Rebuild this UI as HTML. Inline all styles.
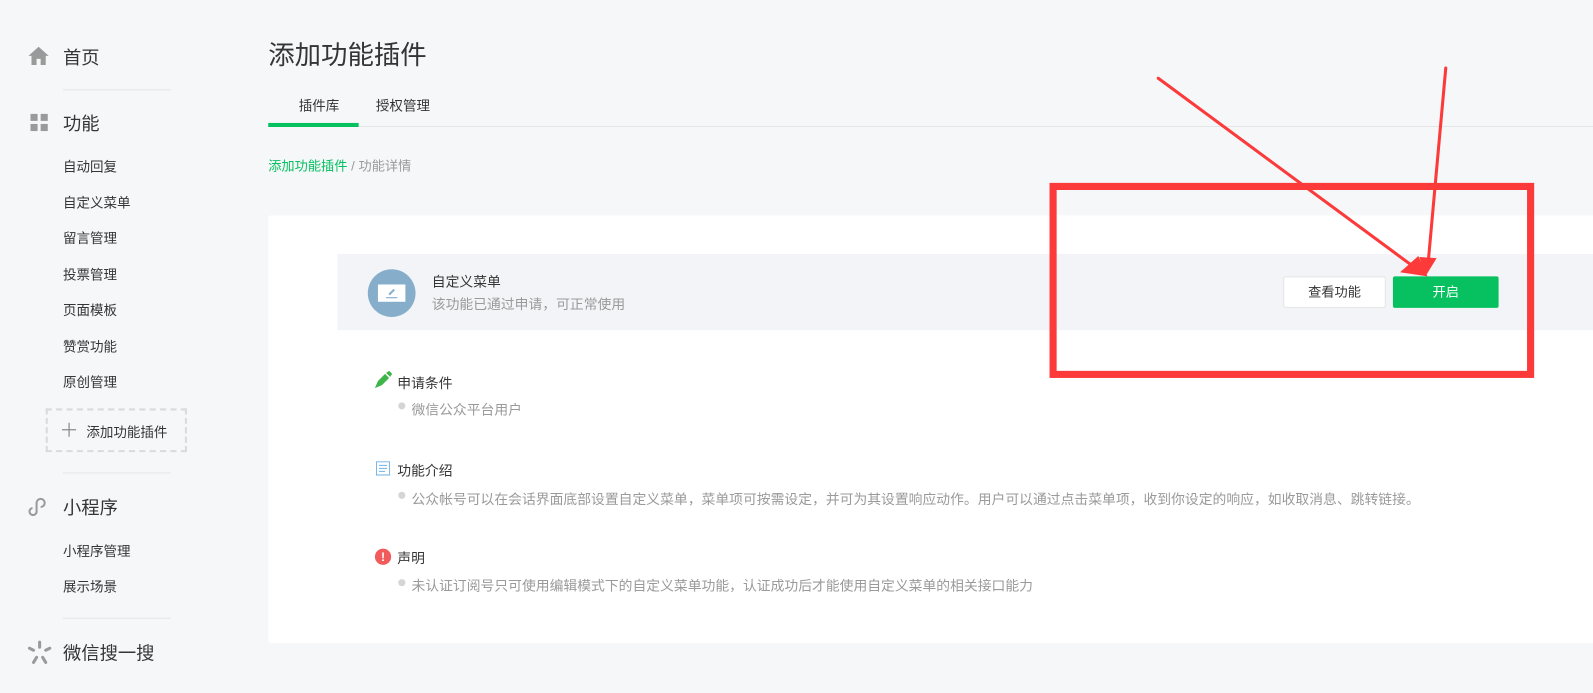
<!DOCTYPE html>
<html><head><meta charset="utf-8"><style>
*{margin:0;padding:0;box-sizing:border-box}
body{width:1593px;height:682px;overflow:hidden;background:#f6f7f9;font-family:"Liberation Sans","Noto Sans CJK SC",sans-serif;color:#353535;position:relative}
#w{position:absolute;left:0;top:0;width:1568px;height:672px;transform:scale(1.016);transform-origin:0 0}
.a{position:absolute;white-space:nowrap}
.h1{font-size:18px;color:#353535}
.sub{font-size:13.3px;color:#353535}
.t{font-size:13.6px}
.sep{position:absolute;left:62px;width:106px;height:1px;background:#e4e5e7}
.g{color:#9a9a9a}
</style></head><body><div id="w">
<svg class="a" style="left:27px;top:44px" width="22" height="22" viewBox="0 0 22 22"><path d="M11 2 L1 11 H4 V20 H9 V14 H13 V20 H18 V11 H21 Z" fill="#9a9a9a"/></svg>
<div class="a h1" style="left:62px;top:43px">首页</div>
<div class="sep" style="top:88px"></div>
<svg class="a" style="left:30px;top:112px" width="18" height="18"><rect x="0" y="0" width="7" height="7" fill="#9a9a9a"/><rect x="10" y="0" width="7" height="7" fill="#9a9a9a"/><rect x="0" y="10" width="7" height="7" fill="#9a9a9a"/><rect x="10" y="10" width="7" height="7" fill="#9a9a9a"/></svg>
<div class="a h1" style="left:62px;top:108px">功能</div>
<div class="a sub" style="left:62px;top:154px">自动回复</div>
<div class="a sub" style="left:62px;top:189px">自定义菜单</div>
<div class="a sub" style="left:62px;top:224px">留言管理</div>
<div class="a sub" style="left:62px;top:260px">投票管理</div>
<div class="a sub" style="left:62px;top:295px">页面模板</div>
<div class="a sub" style="left:62px;top:331px">赞赏功能</div>
<div class="a sub" style="left:62px;top:366px">原创管理</div>
<div class="a" style="left:45px;top:402px;width:139px;height:43px;border:2px dashed #d9dadc"></div>
<svg class="a" style="left:61px;top:416px" width="14" height="14"><path d="M7 0v14M0 7h14" stroke="#8a8a8a" stroke-width="1.2"/></svg>
<div class="a sub" style="left:85px;top:415px">添加功能插件</div>
<div class="sep" style="top:465px"></div>
<svg class="a" style="left:28px;top:488px" width="22" height="20" viewBox="0 0 22 20"><path d="M4 12 A3.5 3.5 0 1 0 8 15 V7 A4 4 0 1 1 12 11" fill="none" stroke="#9a9a9a" stroke-width="2"/></svg>
<div class="a h1" style="left:62px;top:486px">小程序</div>
<div class="a sub" style="left:62px;top:532px">小程序管理</div>
<div class="a sub" style="left:62px;top:567px">展示场景</div>
<div class="sep" style="top:608px"></div>
<svg class="a" style="left:27px;top:630px" width="24" height="24" viewBox="0 0 24 24"><g stroke="#9a9a9a" stroke-width="3" stroke-linecap="round"><path d="M12 2v5"/><path d="M2 8l4 2"/><path d="M22 8l-4 2"/><path d="M6 22l3-5"/><path d="M18 22l-3-5"/></g></svg>
<div class="a h1" style="left:62px;top:629px">微信搜一搜</div>
<div class="a" style="left:264px;top:34px;font-size:26px;color:#353535">添加功能插件</div>
<div class="a" style="left:264px;top:124px;width:1329px;height:1px;background:#e4e5e7"></div>
<div class="a" style="left:264px;top:121px;width:89px;height:4px;background:#07c160"></div>
<div class="a sub" style="left:294px;top:94px">插件库</div>
<div class="a sub" style="left:370px;top:94px">授权管理</div>
<div class="a" style="left:264px;top:153px;font-size:13px"><span style="color:#07c160">添加功能插件</span><span class="g"> / 功能详情</span></div>
<div class="a" style="left:264px;top:212px;width:1329px;height:421px;background:#fff;border-radius:3px"></div>
<div class="a" style="left:332px;top:250px;width:1261px;height:75px;background:#f3f4f7"></div>
<div class="a" style="left:362px;top:265px;width:47px;height:47px;border-radius:50%;background:#86aecb"></div>
<div class="a" style="left:372px;top:280px;width:27px;height:17px;background:#fff"></div>
<svg class="a" style="left:378px;top:283px" width="14" height="11"><path d="M5 7 L10 2" stroke="#86aecb" stroke-width="2"/><path d="M2 10h11" stroke="#86aecb" stroke-width="1"/></svg>
<div class="a t" style="left:425px;top:266px">自定义菜单</div>
<div class="a g t" style="left:425px;top:288px">该功能已通过申请，可正常使用</div>
<div class="a" style="left:1263px;top:272px;width:101px;height:31px;background:#fff;border:1px solid #e4e5e7;border-radius:2px;font-size:13px;text-align:center;line-height:29px">查看功能</div>
<div class="a" style="left:1371px;top:272px;width:104px;height:31px;background:#07c160;border-radius:2px;font-size:13px;text-align:center;line-height:31px;color:#fff">开启</div>
<svg class="a" style="left:368px;top:365px" width="18" height="18" viewBox="0 0 18 18"><path d="M1 17 L4 10 L11 3 L15 7 L8 14 Z" fill="#3db54a"/><path d="M12 2 L15 0 L18 3 L16 6Z" fill="#3db54a"/></svg>
<div class="a t" style="left:391px;top:366px">申请条件</div>
<div class="a" style="left:392px;top:396px;width:7px;height:7px;border-radius:50%;background:#d5d5d5"></div>
<div class="a g t" style="left:405px;top:392px">微信公众平台用户</div>
<svg class="a" style="left:370px;top:454px" width="14" height="14"><rect x="0.5" y="0.5" width="13" height="13" fill="#fff" stroke="#6fb2e6"/><path d="M3 4h8M3 7h8M3 10h6" stroke="#6fb2e6"/></svg>
<div class="a t" style="left:391px;top:452px">功能介绍</div>
<div class="a" style="left:392px;top:484px;width:7px;height:7px;border-radius:50%;background:#d5d5d5"></div>
<div class="a g t" style="left:405px;top:480px">公众帐号可以在会话界面底部设置自定义菜单，菜单项可按需设定，并可为其设置响应动作。用户可以通过点击菜单项，收到你设定的响应，如收取消息、跳转链接。</div>
<div class="a" style="left:369px;top:540px;width:16px;height:16px;border-radius:50%;background:#f15b5b;color:#fff;font-size:12px;font-weight:bold;text-align:center;line-height:16px">!</div>
<div class="a t" style="left:391px;top:538px">声明</div>
<div class="a" style="left:392px;top:570px;width:7px;height:7px;border-radius:50%;background:#d5d5d5"></div>
<div class="a g t" style="left:405px;top:565px">未认证订阅号只可使用编辑模式下的自定义菜单功能，认证成功后才能使用自定义菜单的相关接口能力</div>
<div class="a" style="left:1033px;top:180px;width:477px;height:192px;border:7px solid #fc3a3a"></div>
<svg class="a" style="left:0;top:0" width="1593" height="682">
<path d="M1140 77 L1392 263" stroke="#fc3a3a" stroke-width="3" stroke-linecap="round"/>
<path d="M1405 272 L1378 268 L1396 252 Z" fill="#fc3a3a"/>
<path d="M1423 67 L1406 255" stroke="#fc3a3a" stroke-width="3" stroke-linecap="round"/>
<path d="M1403 272 L1397 253 L1414 254 Z" fill="#fc3a3a"/>
</svg>
</div></body></html>
